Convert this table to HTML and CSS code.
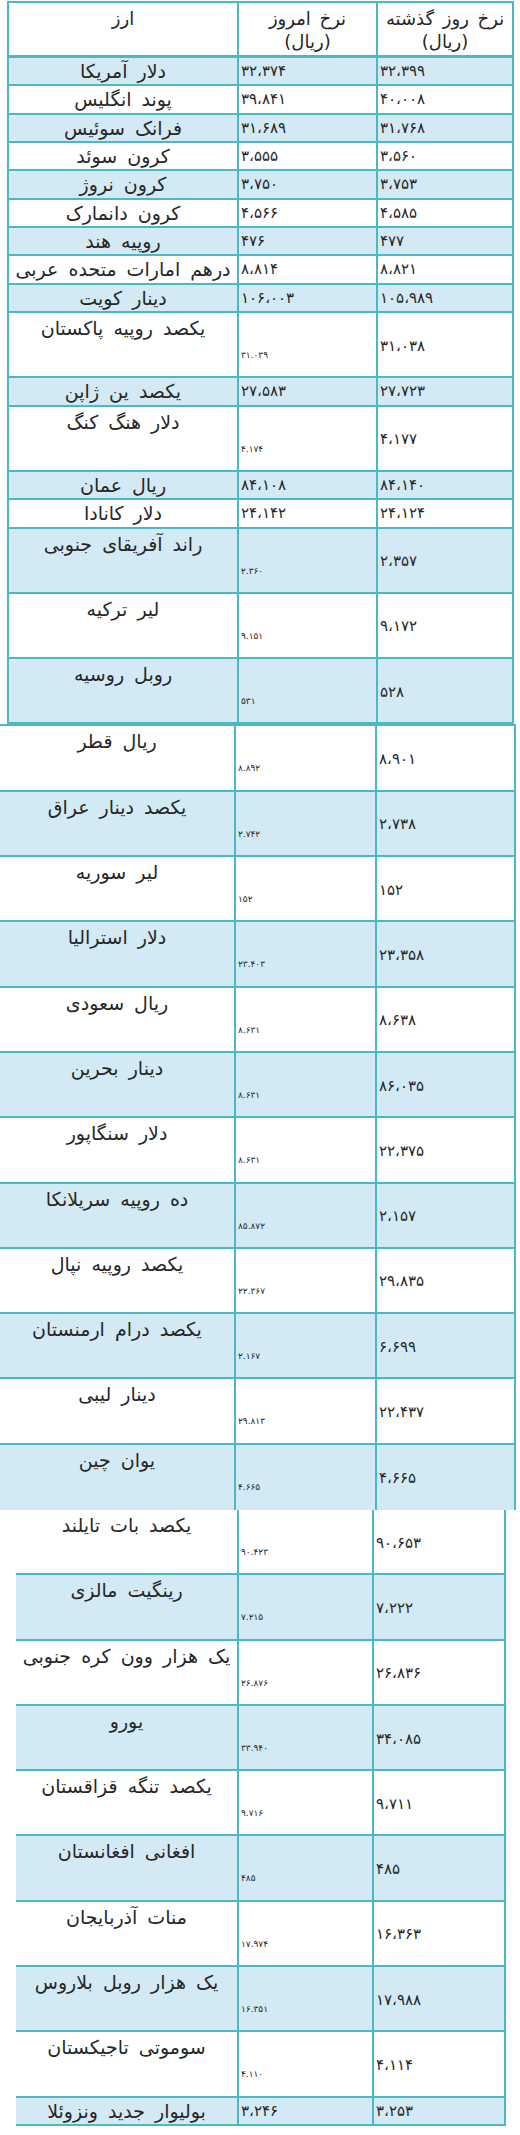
FILE: index.html
```html
<!DOCTYPE html>
<html lang="fa">
<head>
<meta charset="utf-8">
<title>نرخ ارز</title>
<link rel="stylesheet" href="styles.css">
</head>
<body>
<div class="page">

<div class="sec sec-a">
  <div class="row head">
    <div class="cell name"><span>ارز</span></div>
    <div class="cell hcol"><span>نرخ امروز</span><span>(ریال)</span></div>
    <div class="cell hcol"><span>نرخ روز گذشته</span><span>(ریال)</span></div>
  </div>
  <div class="row short alt"><div class="cell name">دلار آمریکا</div><div class="cell num">۳۲،۳۷۴</div><div class="cell num">۳۲،۳۹۹</div></div>
  <div class="row short"><div class="cell name">پوند انگلیس</div><div class="cell num">۳۹،۸۴۱</div><div class="cell num">۴۰،۰۰۸</div></div>
  <div class="row short alt"><div class="cell name">فرانک سوئیس</div><div class="cell num">۳۱،۶۸۹</div><div class="cell num">۳۱،۷۶۸</div></div>
  <div class="row short"><div class="cell name">کرون سوئد</div><div class="cell num">۳،۵۵۵</div><div class="cell num">۳،۵۶۰</div></div>
  <div class="row short alt"><div class="cell name">کرون نروژ</div><div class="cell num">۳،۷۵۰</div><div class="cell num">۳،۷۵۳</div></div>
  <div class="row short"><div class="cell name">کرون دانمارک</div><div class="cell num">۴،۵۶۶</div><div class="cell num">۴،۵۸۵</div></div>
  <div class="row short alt"><div class="cell name">روپیه هند</div><div class="cell num">۴۷۶</div><div class="cell num">۴۷۷</div></div>
  <div class="row short"><div class="cell name">درهم امارات متحده عربی</div><div class="cell num">۸،۸۱۴</div><div class="cell num">۸،۸۲۱</div></div>
  <div class="row short alt"><div class="cell name">دینار کویت</div><div class="cell num">۱۰۶،۰۰۳</div><div class="cell num">۱۰۵،۹۸۹</div></div>
  <div class="row tall"><div class="cell name">یکصد روپیه پاکستان</div><div class="cell small">۳۱.۰۳۹</div><div class="cell num">۳۱،۰۳۸</div></div>
  <div class="row short alt"><div class="cell name">یکصد ین ژاپن</div><div class="cell num">۲۷،۵۸۳</div><div class="cell num">۲۷،۷۲۳</div></div>
  <div class="row tall"><div class="cell name">دلار هنگ کنگ</div><div class="cell small">۴.۱۷۴</div><div class="cell num">۴،۱۷۷</div></div>
  <div class="row short alt"><div class="cell name">ریال عمان</div><div class="cell num">۸۴،۱۰۸</div><div class="cell num">۸۴،۱۴۰</div></div>
  <div class="row short"><div class="cell name">دلار کانادا</div><div class="cell num">۲۴،۱۴۲</div><div class="cell num">۲۴،۱۲۴</div></div>
  <div class="row tall alt"><div class="cell name">راند آفریقای جنوبی</div><div class="cell small">۲.۳۶۰</div><div class="cell num">۲،۳۵۷</div></div>
  <div class="row tall"><div class="cell name">لیر ترکیه</div><div class="cell small">۹.۱۵۱</div><div class="cell num">۹،۱۷۲</div></div>
  <div class="row tall alt"><div class="cell name">روبل روسیه</div><div class="cell small">۵۳۱</div><div class="cell num">۵۲۸</div></div>
</div>

<div class="sec sec-b">
  <div class="row tall"><div class="cell name">ریال قطر</div><div class="cell small">۸.۸۹۲</div><div class="cell num">۸،۹۰۱</div></div>
  <div class="row tall alt"><div class="cell name">یکصد دینار عراق</div><div class="cell small">۲.۷۴۲</div><div class="cell num">۲،۷۳۸</div></div>
  <div class="row tall"><div class="cell name">لیر سوریه</div><div class="cell small">۱۵۲</div><div class="cell num">۱۵۲</div></div>
  <div class="row tall alt"><div class="cell name">دلار استرالیا</div><div class="cell small">۲۳.۴۰۳</div><div class="cell num">۲۳،۳۵۸</div></div>
  <div class="row tall"><div class="cell name">ریال سعودی</div><div class="cell small">۸.۶۳۱</div><div class="cell num">۸،۶۳۸</div></div>
  <div class="row tall alt"><div class="cell name">دینار بحرین</div><div class="cell small">۸.۶۳۱</div><div class="cell num">۸۶،۰۳۵</div></div>
  <div class="row tall"><div class="cell name">دلار سنگاپور</div><div class="cell small">۸.۶۳۱</div><div class="cell num">۲۲،۳۷۵</div></div>
  <div class="row tall alt"><div class="cell name">ده روپیه سریلانکا</div><div class="cell small">۸۵.۸۷۲</div><div class="cell num">۲،۱۵۷</div></div>
  <div class="row tall"><div class="cell name">یکصد روپیه نپال</div><div class="cell small">۲۲.۳۶۷</div><div class="cell num">۲۹،۸۳۵</div></div>
  <div class="row tall alt"><div class="cell name">یکصد درام ارمنستان</div><div class="cell small">۲.۱۶۷</div><div class="cell num">۶،۶۹۹</div></div>
  <div class="row tall"><div class="cell name">دینار لیبی</div><div class="cell small">۲۹.۸۱۳</div><div class="cell num">۲۲،۴۳۷</div></div>
  <div class="row tall alt last"><div class="cell name">یوان چین</div><div class="cell small">۴.۶۶۵</div><div class="cell num">۴،۶۶۵</div></div>
</div>

<div class="sec sec-c">
  <div class="row tall"><div class="cell name">یکصد بات تایلند</div><div class="cell small">۹۰.۴۲۳</div><div class="cell num">۹۰،۶۵۳</div></div>
  <div class="row tall alt"><div class="cell name">رینگیت مالزی</div><div class="cell small">۷.۲۱۵</div><div class="cell num">۷،۲۲۲</div></div>
  <div class="row tall"><div class="cell name">یک هزار وون کره جنوبی</div><div class="cell small">۲۶.۸۷۶</div><div class="cell num">۲۶،۸۳۶</div></div>
  <div class="row tall alt"><div class="cell name">یورو</div><div class="cell small">۳۳.۹۴۰</div><div class="cell num">۳۴،۰۸۵</div></div>
  <div class="row tall"><div class="cell name">یکصد تنگه قزاقستان</div><div class="cell small">۹.۷۱۶</div><div class="cell num">۹،۷۱۱</div></div>
  <div class="row tall alt"><div class="cell name">افغانی افغانستان</div><div class="cell small">۴۸۵</div><div class="cell num">۴۸۵</div></div>
  <div class="row tall"><div class="cell name">منات آذربایجان</div><div class="cell small">۱۷.۹۷۴</div><div class="cell num">۱۶،۳۶۳</div></div>
  <div class="row tall alt"><div class="cell name">یک هزار روبل بلاروس</div><div class="cell small">۱۶.۳۵۱</div><div class="cell num">۱۷،۹۸۸</div></div>
  <div class="row tall"><div class="cell name">سوموتی تاجیکستان</div><div class="cell small">۴.۱۱۰</div><div class="cell num">۴،۱۱۴</div></div>
  <div class="row short alt"><div class="cell name">بولیوار جدید ونزوئلا</div><div class="cell num">۳،۲۴۶</div><div class="cell num">۳،۲۵۳</div></div>
</div>

</div>
</body>
</html>
```

FILE: styles.css
```css
* { box-sizing: border-box; }

html, body {
  margin: 0;
  padding: 0;
  background: #ffffff;
}

body {
  font-family: "DejaVu Sans", "Noto Sans", sans-serif;
  color: #262626;
}

.page {
  width: 520px;
}

.sec {
  display: flex;
  flex-direction: column;
  border-top: 2px solid #4cb7c5;
}

.sec-a {
  margin: 1px 0 0 7px;
  width: 507px;
  border-left: 2px solid #4cb7c5;
}

.sec-b {
  width: 516px;
}

.sec-c {
  margin-left: 16px;
  width: 490px;
  border-top: none;
}

.row {
  display: grid;
  border-bottom: 2px solid #4cb7c5;
  background: #ffffff;
}

.sec-a .row { grid-template-columns: 230px 139px 136px; }
.sec-b .row { grid-template-columns: 236px 141px 139px; }
.sec-c .row { grid-template-columns: 223px 135px 132px; }

.row.alt { background: #d3e9f3; }

.row.head {
  height: 55px;
  border-bottom-width: 3px;
}

.row.short { height: 28.33px; }
.row.tall { height: 65.3px; }
.sec-b .row.last { border-bottom: none; }

.cell {
  border-right: 2px solid #4cb7c5;
  display: flex;
  align-items: center;
  min-width: 0;
}

.name {
  justify-content: center;
  direction: rtl;
  text-align: center;
  font-size: 19px;
  line-height: 22px;
  word-spacing: 4px;
  white-space: nowrap;
}

.num {
  direction: ltr;
  justify-content: flex-start;
  padding-left: 2px;
  font-size: 15px;
  line-height: 18px;
  letter-spacing: 2px;
}

.small {
  direction: ltr;
  align-items: flex-start;
  padding: 37px 0 0 2px;
  font-size: 9px;
  line-height: 11px;
  letter-spacing: 1.5px;
}

.tall .name {
  align-items: flex-start;
  padding-top: 4px;
}

.tall .num {
  padding-top: 2px;
}

.head .cell {
  flex-direction: column;
  align-items: center;
  justify-content: flex-start;
  padding-top: 4px;
  font-size: 18px;
  line-height: 23px;
  word-spacing: 3px;
  direction: rtl;
}

.head .name {
  padding-top: 4px;
}
```
